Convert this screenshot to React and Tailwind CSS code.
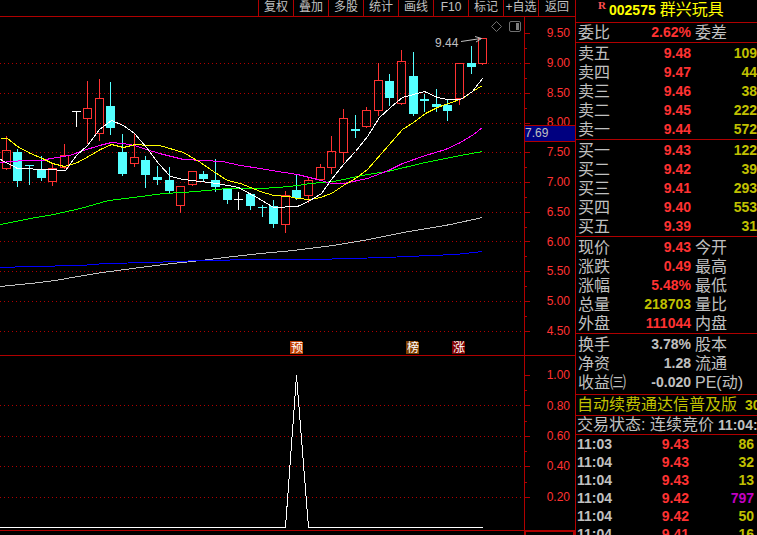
import React from "react";

const tools = ["复权", "叠加", "多股", "统计", "画线", "F10", "标记", "+自选", "返回"];

const priceLabels = ["9.50", "9.00", "8.50", "8.00", "7.50", "7.00", "6.50", "6.00", "5.50", "5.00", "4.50"];
const indicatorLabels = ["1.00", "0.80", "0.60", "0.40", "0.20"];

const priceMajor = [33, 63, 93, 123, 152, 182, 212, 241, 271, 301, 331];
const priceMinor = [48, 78, 108, 137, 167, 197, 227, 256, 286, 316];
const indicatorMajor = [375, 405, 436, 466, 497];
const indicatorMinor = [390, 421, 451, 482];

// x, kind (u = up, d = down, w = unchanged), high, body top, body bottom, low
const candles = [
  [6, "u", 135, 150, 168, 168],
  [17, "d", 148, 152, 181, 185],
  [29, "d", 164, 165, 166, 183],
  [41, "d", 155, 170, 178, 179],
  [52, "u", 163, 168, 181, 184],
  [64, "u", 143, 155, 167, 167],
  [76, "w", 111, 111, 112, 125],
  [87, "u", 80, 108, 118, 142],
  [99, "u", 78, 98, 133, 139],
  [110, "d", 81, 106, 128, 133],
  [122, "d", 133, 152, 174, 174],
  [134, "u", 132, 157, 163, 165],
  [145, "d", 155, 160, 175, 186],
  [157, "d", 165, 177, 180, 183],
  [169, "d", 166, 180, 191, 191],
  [180, "u", 186, 186, 205, 211],
  [192, "u", 171, 171, 184, 184],
  [203, "d", 170, 174, 179, 180],
  [215, "d", 158, 180, 187, 190],
  [227, "d", 187, 188, 200, 202],
  [238, "w", 191, 199, 200, 208],
  [250, "d", 193, 194, 206, 208],
  [262, "d", 204, 207, 208, 215],
  [273, "d", 199, 206, 224, 226],
  [285, "u", 190, 195, 224, 231],
  [296, "d", 173, 190, 198, 198],
  [308, "u", 176, 180, 195, 201],
  [320, "u", 163, 167, 179, 179],
  [331, "u", 135, 151, 167, 172],
  [343, "u", 108, 118, 152, 161],
  [355, "d", 114, 129, 131, 136],
  [366, "u", 106, 110, 126, 126],
  [378, "u", 62, 80, 110, 114],
  [389, "d", 73, 81, 98, 104],
  [401, "u", 49, 61, 103, 103],
  [413, "d", 51, 76, 114, 114],
  [424, "d", 93, 99, 101, 110],
  [436, "d", 88, 104, 107, 110],
  [447, "d", 98, 105, 111, 119],
  [459, "u", 63, 63, 98, 103],
  [471, "d", 45, 63, 67, 72],
  [482, "u", 38, 38, 63, 63],
];

const averages = [
  ["#c0c0c0", "0,286 30,283 55,280 77,276 102,272 132,268 163,264 200,260 233,256 260,253 293,250 333,245 363,240 403,232 450,224 482,217"],
  ["#0000ff", "0,267 30,266 80,265 105,263 150,262 200,260 260,259 314,259 350,258 385,257 430,255 455,254 482,251"],
  ["#00ff00", "0,224 30,218 53,214 80,208 108,200 133,197 163,193 183,192 207,190 227,188 260,188 278,187 297,185 310,183 333,181 367,174 387,171 425,162 460,155 482,151"],
  ["#ff00ff", "0,162 23,160 42,160 50,158 69,155 83,150 99,145 111,142 122,143 134,145 146,149 159,153 183,159 203,160 222,161 240,165 260,168 277,171 297,174 317,179 331,183 343,183 367,178 388,170 402,163 425,155 445,149 460,142 473,134 482,127"],
  ["#ffff00", "0,138 7,138 17,146 30,153 42,158 52,163 64,166 77,162 88,156 100,149 111,144 123,147 135,144 147,145 159,145 183,152 200,162 213,171 227,180 240,183 260,191 273,195 288,196 297,198 310,199 320,197 331,193 343,185 355,178 367,169 402,129 413,122 425,113 437,107 448,103 462,98 472,91 482,85"],
  ["#ffffff", "0,159 17,168 48,169 65,170 76,155 87,145 99,129 111,120 123,125 134,133 146,147 158,163 170,176 183,179 200,181 217,183 238,187 260,199 273,207 297,206 308,201 321,193 331,179 343,164 355,151 367,136 379,117 390,107 402,97 413,94 424,91 437,97 447,99 460,99 472,91 482,78"],
];

const badges = [
  [290, "预", "#c04000"],
  [406, "榜", "#804000"],
  [452, "涨", "#800000"],
];

const sells = [["卖五", "9.48", "109"], ["卖四", "9.47", "44"], ["卖三", "9.46", "38"], ["卖二", "9.45", "222"], ["卖一", "9.44", "572"]];
const buys = [["买一", "9.43", "122"], ["买二", "9.42", "39"], ["买三", "9.41", "293"], ["买四", "9.40", "553"], ["买五", "9.39", "31"]];
const stats = [
  ["现价", "9.43", "今开"],
  ["涨跌", "0.49", "最高"],
  ["涨幅", "5.48%", "最低"],
  ["总量", "218703", "量比", "text-[#c0c000]"],
  ["外盘", "111044", "内盘"],
];
const basics = [
  ["换手", "3.78%", "股本", "text-[#c0c0c0]"],
  ["净资", "1.28", "流通", "text-[#c0c0c0]"],
  ["收益㈢", "-0.020", "PE(动)", "text-[#c0c0c0]"],
];
const trades = [
  ["11:03", "9.43", "86"],
  ["11:04", "9.43", "32"],
  ["11:04", "9.43", "13"],
  ["11:04", "9.42", "797"],
  ["11:04", "9.42", "50"],
  ["11:04", "9.41", "16"],
];

function Candle({ data }) {
  const [x, kind, high, top, bottom, low] = data;
  if (kind === "u") {
    return (
      <g stroke="#ff3232" fill="none">
        <path d={`M${x} ${high}V${top}M${x} ${bottom}V${low + 1}`} />
        <rect x={x - 4} y={top} width="8" height={bottom - top} />
      </g>
    );
  }
  const color = kind === "w" ? "#ffffff" : "#54ffff";
  return (
    <g>
      <path d={`M${x} ${high}V${low + 1}`} stroke={color} />
      <rect x={x - 4.5} y={top - 0.5} width="9" height={bottom - top} fill={color} />
    </g>
  );
}

function Scale({ top, bottom, grid, major, minor }) {
  return (
    <g stroke="#b00000">
      {grid.map((y) => (
        <path key={y} d={`M-0.5 ${y}H523`} strokeDasharray="1 3" />
      ))}
      <path d={`M524 ${top}V${bottom}`} />
      {major.map((y) => (
        <path key={y} d={`M524 ${y}H529`} />
      ))}
      {minor.map((y) => (
        <path key={y} d={`M524 ${y}H526`} />
      ))}
    </g>
  );
}

function PriceChart() {
  return (
    <svg className="block h-[338px] min-w-0 flex-1" viewBox="0 17 530 338" preserveAspectRatio="none" role="img" aria-label="K线图">
      <g transform="translate(.5 .5)" shapeRendering="crispEdges" fill="none">
        <Scale top={16} bottom={356} grid={priceMajor.slice(1)} major={priceMajor} minor={priceMinor} />
        {candles.map((c) => (
          <Candle key={c[0]} data={c} />
        ))}
        {averages.map(([color, points]) => (
          <polyline key={color} points={points} stroke={color} />
        ))}
      </g>
      <g fill="none" stroke="#c0c0c0">
        <path d="M461 41.5L481 38.5M475 36.5L481.500 38.500L476 42" />
      </g>
      <g fill="none" stroke="#707070">
        <path d="M496.500 21.500L501.500 26.500L496.500 31.500L491.500 26.500Z" />
        <rect x="509.500" y="21.500" width="11" height="10" rx="1.500" />
        <rect x="516" y="23" width="3" height="7" fill="#808080" stroke="none" />
      </g>
      <text x="435" y="47" fontSize="12" fill="#c0c0c0">9.44</text>
      {badges.map(([x, label, color]) => (
        <g key={label}>
          <path d={`M${x} 341H${x + 12}V342H${x + 13}V354H${x}Z`} fill={color} shapeRendering="crispEdges" />
          <text x={x + 1} y="352" fontSize="12" fill="#ffffff">{label}</text>
        </g>
      ))}
    </svg>
  );
}

function IndicatorChart() {
  return (
    <svg className="block h-[174px] min-w-0 flex-1" viewBox="0 356 530 174" preserveAspectRatio="none" role="img" aria-label="指标图">
      <g transform="translate(.5 .5)" shapeRendering="crispEdges" fill="none">
        <Scale top={355} bottom={531} grid={indicatorMajor.slice(1)} major={indicatorMajor} minor={indicatorMinor} />
        <polyline points="-1,527 285,527 296,375 308,527 482,527" stroke="#ffffff" />
      </g>
    </svg>
  );
}

function AxisLabels({ labels, className }) {
  return (
    <ol className={"grid auto-rows-fr text-right text-[12px] leading-none text-[#ff3232] " + className}>
      {labels.map((l) => (
        <li key={l} className="flex items-center justify-end">{l}</li>
      ))}
    </ol>
  );
}

function QuoteTable({ rows, volume = false, className = "" }) {
  return (
    <div className={"border-b border-[#b00000] " + className}>
      <table className="w-full table-fixed border-collapse leading-[19px] whitespace-nowrap">
        <colgroup>
          <col className="w-[50px]" />
          <col className="w-[65px]" />
          <col />
        </colgroup>
        <tbody>
          {rows.map(([label, value, extra, tone]) => (
            <tr key={label} className="h-[19px]">
              <th scope="row" className="h-[19px] p-0 pl-[2px] text-left align-middle text-[16px] font-normal text-[#c0c0c0]">
                <span className="block h-[19px]">{label}</span>
              </th>
              <td className={"p-0 text-right align-middle text-[14px] font-bold " + (tone || "text-[#ff3232]")}>
                <span className="block h-[19px]">{value}</span>
              </td>
              <td className={"p-0 align-middle " + (volume ? "text-right text-[14px] font-bold text-[#c0c000]" : "pl-1 text-[16px] text-[#c0c0c0]")}>
                <span className="block h-[19px]">{extra}</span>
              </td>
            </tr>
          ))}
        </tbody>
      </table>
    </div>
  );
}

export default function App() {
  return (
    <div className="flex h-screen overflow-hidden bg-black font-['Liberation_Sans','Noto_Sans_CJK_SC',sans-serif] text-[#c0c0c0]">
      <main className="flex min-w-0 flex-1 flex-col">
        <nav className="flex h-[17px] shrink-0 justify-end border-b border-[#b00000]">
          {tools.map((t) => (
            <button
              key={t}
              type="button"
              className="flex w-[35px] items-center justify-center border-l border-[#b00000] pb-[2px] text-[12px] leading-[12px] whitespace-nowrap last:w-[37px]"
            >
              {t}
            </button>
          ))}
        </nav>
        <section className="flex shrink-0 border-b border-[#b00000]">
          <PriceChart />
          <div className="relative w-[45px] pt-px pr-[5px]">
            <AxisLabels labels={priceLabels} className="h-[328px]" />
            <div className="absolute top-[108px] right-0 h-[17px] w-[50px] border-y border-[#b00000] bg-[#000080] text-[12px] leading-[15px]">
              7.69
            </div>
          </div>
        </section>
        <section className="flex shrink-0">
          <IndicatorChart />
          <div className="w-[45px] pt-1 pr-[5px]">
            <AxisLabels labels={indicatorLabels} className="h-[152px]" />
          </div>
        </section>
        <footer className="flex min-h-0 flex-1">
          <div className="flex-1 border-t border-[#b00000]" />
          <div className="w-[51px] border-2 border-b-0 border-[#b00000]" />
        </footer>
      </main>

      <aside className="flex w-[182px] shrink-0 flex-col overflow-hidden border-l border-[#b00000]">
        <header className="flex h-[23px] shrink-0 border-b border-[#b00000] pl-[22px] whitespace-nowrap">
          <span className="w-[11px] font-['Liberation_Serif',serif] text-[11px] leading-[11px] font-bold text-[#ff5050]">R</span>
          <h1 className="flex gap-1 leading-[20px] text-[#ffff00]">
            <span className="text-[14px] font-bold">002575</span>
            <span className="text-[16px]">群兴玩具</span>
          </h1>
        </header>
        <QuoteTable rows={[["委比", "2.62%", "委差"]]} />
        <QuoteTable rows={sells} volume className="pt-px" />
        <QuoteTable rows={buys} volume className="pt-px" />
        <QuoteTable rows={stats} className="pt-px" />
        <QuoteTable rows={basics} className="pt-px pb-[2px]" />
        <p className="flex h-[21px] shrink-0 gap-2 border-b border-[#b00000] pl-px leading-[20px] whitespace-nowrap text-[#c0c000]">
          <span className="text-[16px]">自动续费通达信普及版</span>
          <span className="text-[14px] font-bold">30</span>
        </p>
        <p className="flex h-[19px] shrink-0 gap-1 border-b border-[#b00000] pl-px leading-[18px] whitespace-nowrap">
          <span className="text-[16px]">交易状态: 连续竞价</span>
          <span className="text-[14px] font-bold">11:04:</span>
        </p>
        <table className="w-full table-fixed border-collapse text-[14px] leading-[18px] font-bold">
          <colgroup>
            <col className="w-[50px]" />
            <col className="w-[63px]" />
            <col />
          </colgroup>
          <tbody>
            {trades.map(([time, price, vol], i) => (
              <tr key={i} className="h-[18px]">
                <td className="p-0 pl-px">{time}</td>
                <td className="p-0 text-right text-[#ff3232]">{price}</td>
                <td className={"p-0 pr-[3px] text-right " + (vol === "797" ? "text-[#c000c0]" : "text-[#c0c000]")}>{vol}</td>
              </tr>
            ))}
          </tbody>
        </table>
      </aside>
    </div>
  );
}
